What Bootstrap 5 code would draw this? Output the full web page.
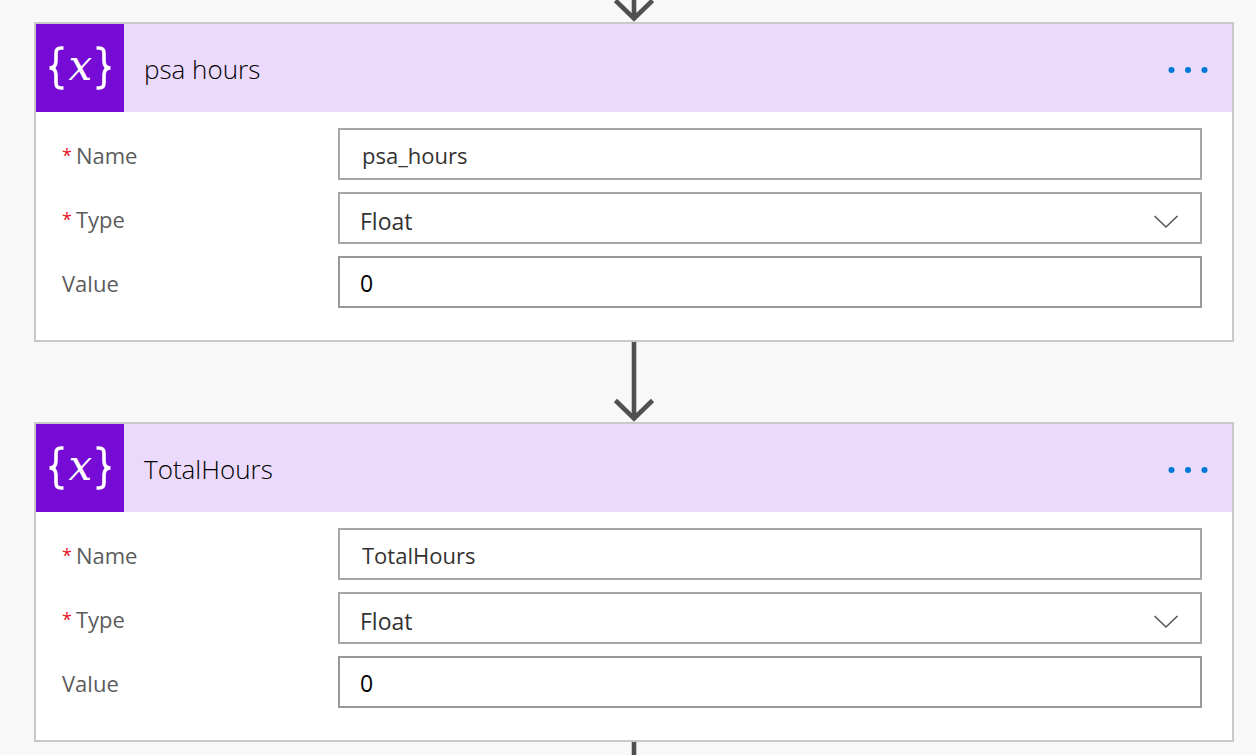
<!DOCTYPE html>
<html lang="en">
<head>
<meta charset="utf-8">
<meta name="viewport" content="width=device-width, initial-scale=1">
<title>Flow variables</title>
<link rel="stylesheet" href="https://cdn.jsdelivr.net/npm/bootstrap@5.3.0/dist/css/bootstrap.min.css">
<style>
  body { background: #f8f8f8; font-family: "Open Sans", "Noto Sans", sans-serif; }
  .flow { height: 100vh; padding: 0 22px 0 34px; }
  .connector { height: 80px; color: #505050; }
  .connector-in { height: 22px; }
  .connector svg { display: block; flex: none; }
  .step { border: 2px solid #c8c8c8; }
  .step-head { height: 88px; background: #ebdafb; }
  .step-icon { width: 88px; height: 88px; background: #770bd6; }
  .step-title { font-size: 26px; line-height: 36px; font-weight: 300; color: #000; padding: 2px 0 0 20px; }
  .step-menu { margin-right: 16px; padding: 12px 8px 8px; color: #0078d7; line-height: 1; }
  .step-body { padding: 16px 30px 32px 26px; gap: 12px; }
  .field-label { width: 276px; font-size: 22px; line-height: 32px; color: #5c5c5c; padding-top: 2px; }
  .required { color: #e81123; font-size: 18px; line-height: 1; vertical-align: 2px; margin-right: 4px; }
  .form-control.field, .form-select.field {
    height: 52px; border: 2px solid #a6a6a6; border-radius: 0; background-color: #fff;
    font-size: 22px; line-height: 32px; color: #333; padding: 8px 20px 6px 22px; }
  .form-select.field {
    font-size: 23px; padding: 10px 60px 4px 20px; background-position: right 21px top 19px; background-size: 26px 16px;
    background-image: url("data:image/svg+xml,%3Csvg xmlns='http://www.w3.org/2000/svg' viewBox='0 0 26 16'%3E%3Cpath d='M1.5 3 13 14 24.5 3' fill='none' stroke='%23555' stroke-width='1.6'/%3E%3C/svg%3E"); }
  .form-control.field-value { border-color: #999; color: #000; font-size: 23px; padding-left: 20px; }
</style>
</head>
<body>
<svg class="d-none" aria-hidden="true">
  <symbol id="arrow" viewBox="0 0 40 80">
    <path d="M20 0V76M1.500 58.500 20 76.500 38.500 58.500" fill="none" stroke="currentColor" stroke-width="4.600"/>
  </symbol>
  <symbol id="variable" viewBox="0 0 88 88">
    <g fill="none" stroke="#fff" stroke-width="3.600">
      <path d="M27.500 24H25Q20 24 20 29V37Q20 44 13.500 44Q20 44 20 51V59Q20 64 25 64H27.500"/>
      <path d="M60.500 24H63Q68 24 68 29V37Q68 44 74.500 44Q68 44 68 51V59Q68 64 63 64H60.500"/>
    </g>
    <text x="44" y="56" text-anchor="middle" fill="#fff" font-family="DejaVu Math TeX Gyre, DejaVu Serif, serif" font-size="42">𝑥</text>
  </symbol>
  <symbol id="dots" viewBox="0 0 40 8">
    <g fill="currentColor"><circle cx="3.500" cy="4" r="3"/><circle cx="20" cy="4" r="3"/><circle cx="36.500" cy="4" r="3"/></g>
  </symbol>
</svg>

<main class="flow d-flex flex-column overflow-hidden">
  <div class="connector connector-in d-flex flex-shrink-0 justify-content-center align-items-end overflow-hidden">
    <svg width="40" height="80" aria-hidden="true"><use href="#arrow"/></svg>
  </div>

  <section class="step bg-white flex-shrink-0">
    <header class="step-head d-flex align-items-center">
      <div class="step-icon flex-shrink-0"><svg width="88" height="88" aria-hidden="true"><use href="#variable"/></svg></div>
      <h2 class="step-title flex-grow-1 mb-0">psa hours</h2>
      <button type="button" class="step-menu btn border-0" aria-label="More options"><svg class="d-block" width="40" height="8"><use href="#dots"/></svg></button>
    </header>
    <form class="step-body d-flex flex-column">
      <div class="d-flex align-items-center">
        <label class="field-label flex-shrink-0" for="name1"><span class="required">*</span>Name</label>
        <input class="form-control field" id="name1" type="text" value="psa_hours">
      </div>
      <div class="d-flex align-items-center">
        <label class="field-label flex-shrink-0" for="type1"><span class="required">*</span>Type</label>
        <select class="form-select field" id="type1"><option>Float</option></select>
      </div>
      <div class="d-flex align-items-center">
        <label class="field-label flex-shrink-0" for="value1">Value</label>
        <input class="form-control field field-value" id="value1" type="text" value="0">
      </div>
    </form>
  </section>

  <div class="connector d-flex flex-shrink-0 justify-content-center">
    <svg width="40" height="80" aria-hidden="true"><use href="#arrow"/></svg>
  </div>

  <section class="step bg-white flex-shrink-0">
    <header class="step-head d-flex align-items-center">
      <div class="step-icon flex-shrink-0"><svg width="88" height="88" aria-hidden="true"><use href="#variable"/></svg></div>
      <h2 class="step-title flex-grow-1 mb-0">TotalHours</h2>
      <button type="button" class="step-menu btn border-0" aria-label="More options"><svg class="d-block" width="40" height="8"><use href="#dots"/></svg></button>
    </header>
    <form class="step-body d-flex flex-column">
      <div class="d-flex align-items-center">
        <label class="field-label flex-shrink-0" for="name2"><span class="required">*</span>Name</label>
        <input class="form-control field" id="name2" type="text" value="TotalHours">
      </div>
      <div class="d-flex align-items-center">
        <label class="field-label flex-shrink-0" for="type2"><span class="required">*</span>Type</label>
        <select class="form-select field" id="type2"><option>Float</option></select>
      </div>
      <div class="d-flex align-items-center">
        <label class="field-label flex-shrink-0" for="value2">Value</label>
        <input class="form-control field field-value" id="value2" type="text" value="0">
      </div>
    </form>
  </section>

  <div class="connector d-flex flex-shrink-0 justify-content-center">
    <svg width="40" height="80" aria-hidden="true"><use href="#arrow"/></svg>
  </div>
</main>
<script src="https://cdn.jsdelivr.net/npm/bootstrap@5.3.0/dist/js/bootstrap.bundle.min.js"></script>
</body>
</html>
